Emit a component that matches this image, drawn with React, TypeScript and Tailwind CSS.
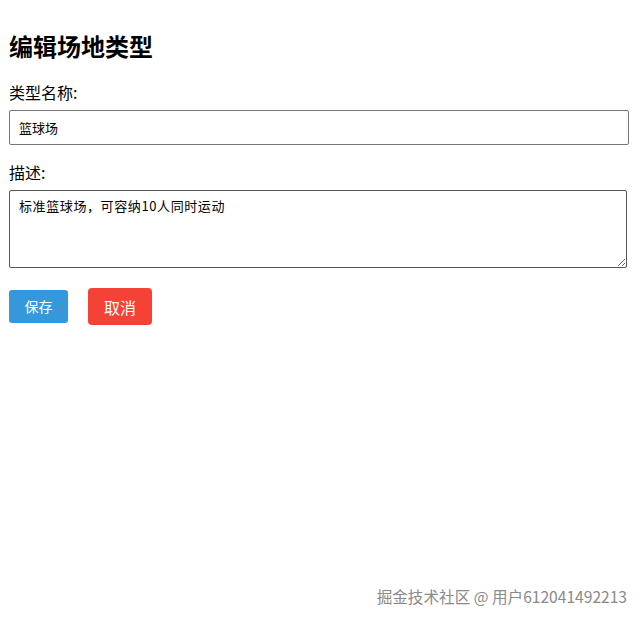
import { useState } from "react";

const EditVenueType = () => {
  const [name, setName] = useState<string>("篮球场");
  const [desc, setDesc] = useState<string>("标准篮球场，可容纳10人同时运动");

  return (
    <div
      className="relative min-h-[622px] bg-white px-[9px] pt-[28px] text-black"
      style={{ fontFamily: '"Microsoft YaHei", "Noto Sans CJK SC", sans-serif' }}
    >
      <h1 className="text-[24px] font-bold leading-[36px]">编辑场地类型</h1>
      <div className="mt-[16px]">
        <label className="block text-[16px] leading-[24px]">类型名称:</label>
        <input
          value={name}
          onChange={(e) => setName(e.target.value)}
          className="mt-[6px] block h-[35px] w-[620px] rounded-[2px] border border-[#767676] px-[9px] text-[13px] outline-none"
        />
      </div>
      <div className="mt-[15px]">
        <label className="block text-[16px] leading-[24px]">描述:</label>
        <textarea
          value={desc}
          onChange={(e) => setDesc(e.target.value)}
          className="mt-[6px] block h-[78px] w-[618px] rounded-[2px] border border-[#555] px-[9px] pt-[6px] text-[13px] leading-[17px] tracking-[0.6px] outline-none"
          style={{ fontFamily: '"Noto Sans CJK SC", monospace' }}
        />
      </div>
      <div className="mt-[20px] flex items-center gap-[20px]">
        <button className="h-[33px] w-[59px] rounded-[3px] bg-[#3498db] text-[14px] text-white">
          保存
        </button>
        <button className="h-[37px] w-[64px] rounded-[4px] bg-[#f44336] text-[16px] text-white">
          取消
        </button>
      </div>
      <div
        className="absolute bottom-[14px] right-[16px] text-[15.6px] text-[#8a8a8a]"
        style={{ textShadow: "0 0 2px #fff" }}
      >
        掘金技术社区 @ 用户612041492213
      </div>
    </div>
  );
};

export default function App() {
  return <EditVenueType />;
}
